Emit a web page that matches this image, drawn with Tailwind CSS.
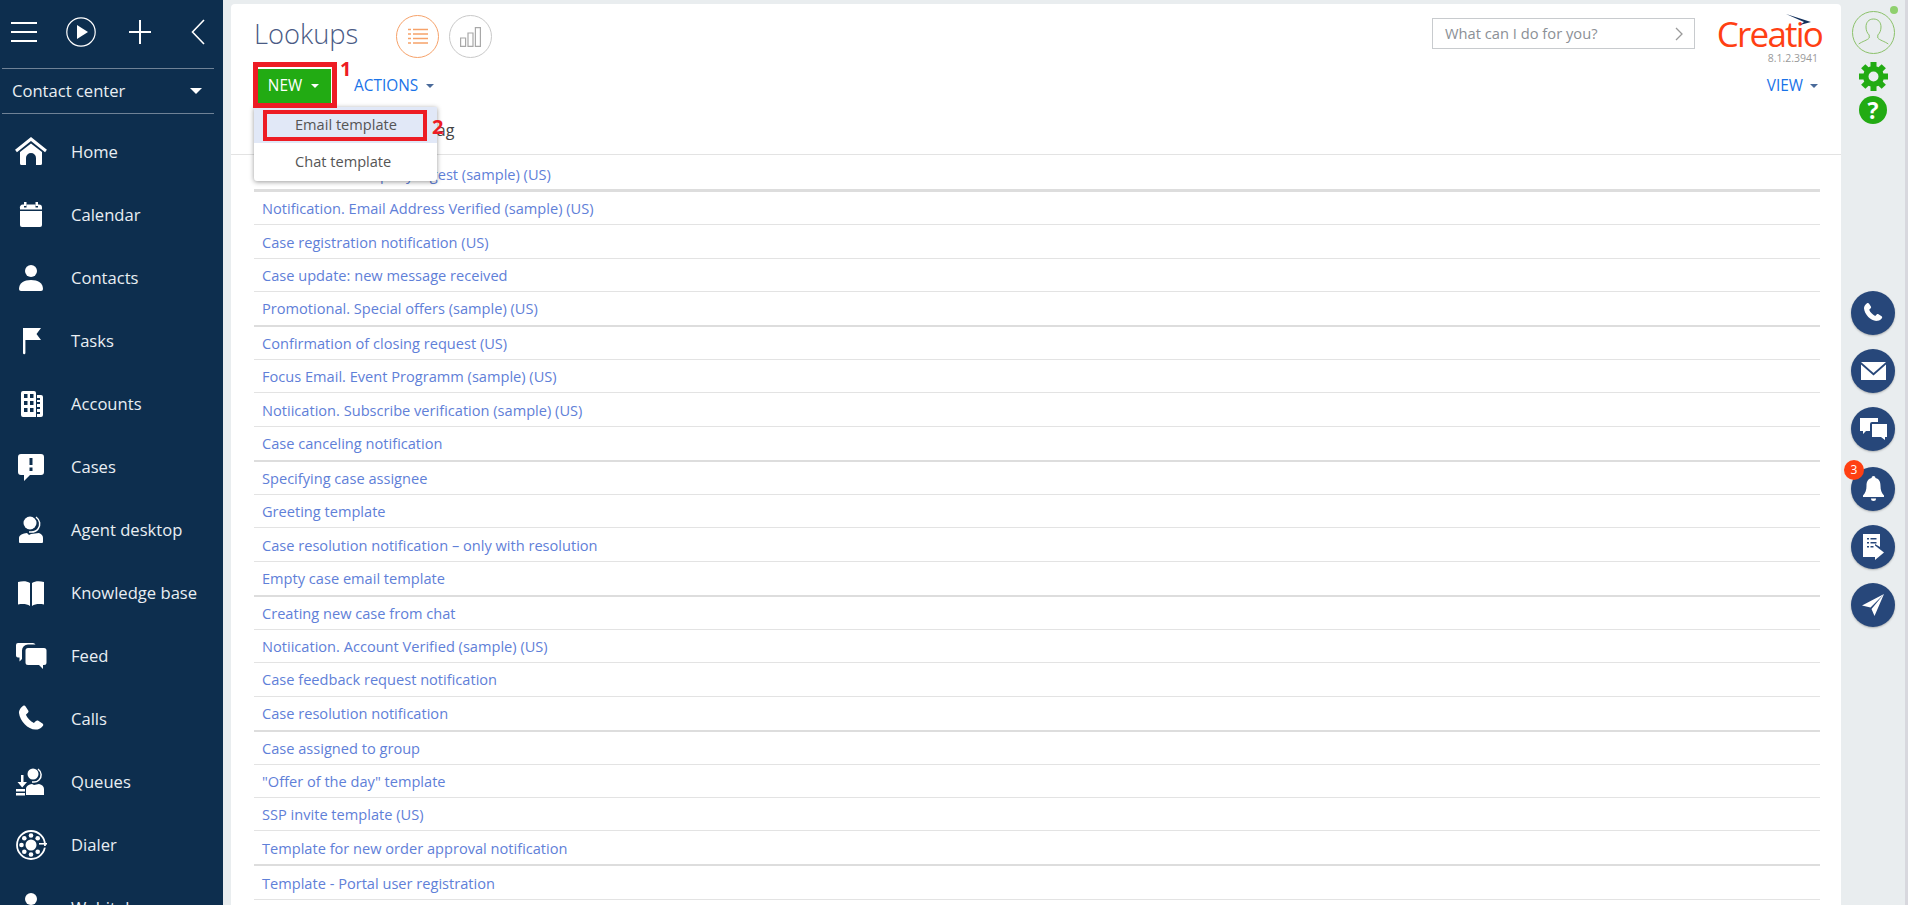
<!DOCTYPE html>
<html lang="en">
<head>
<meta charset="utf-8">
<title>Lookups</title>
<script src="https://cdn.jsdelivr.net/npm/@tailwindcss/browser@4"></script>
</head>
<body class="h-[905px] w-[1908px] overflow-hidden bg-[#e9edef] font-['Open_Sans',sans-serif]">
<div class="flex h-[905px] w-[1908px]">

  <!-- Sidebar -->
  <aside class="flex h-[905px] w-[223px] shrink-0 flex-col overflow-hidden bg-[#0d2e4e] text-[#e9eef3]">
    <div class="flex h-[68px] shrink-0 items-center pl-[11px] pb-[4px]">
      <svg class="h-[24px] w-[26px]" viewBox="0 0 26 24" fill="none" stroke="#fff" stroke-width="2"><path d="M0 3h26M0 12h26M0 21h26"/></svg>
      <svg class="ml-[29px] h-[30px] w-[30px]" viewBox="0 0 30 30" fill="none"><circle cx="15" cy="15" r="14.2" stroke="#fff" stroke-width="1.2"/><path d="M11 8l11 7-11 7z" fill="#fff"/></svg>
      <svg class="ml-[32px] h-[24px] w-[24px]" viewBox="0 0 24 24" fill="none" stroke="#fff" stroke-width="2"><path d="M12 0v24M1 12h22"/></svg>
      <svg class="ml-[39px] h-[26px] w-[14px]" viewBox="0 0 14 26" fill="none" stroke="#fff" stroke-width="1.6"><path d="M13 1L1.5 13 13 25"/></svg>
    </div>
    <div class="mx-[2px] flex h-[46px] w-[212px] shrink-0 items-center justify-between border-y border-[#6f8296] pl-[10px] pr-[12px] text-[16.600px]">
      <span>Contact center</span>
      <span class="h-0 w-0 border-x-[6px] border-t-[6px] border-x-transparent border-t-white"></span>
    </div>
    <nav class="flex flex-col pt-[6.5px] text-[16.600px]">
      <a class="flex h-[63px] shrink-0 items-center">
        <svg class="ml-[15px] h-[32px] w-[32px]" viewBox="0 0 32 32" fill="#fff"><path d="M1 15L16 3l15 12" fill="none" stroke="#fff" stroke-width="3"/><path d="M5 16L16 7.500l11 8.500v11.500a1.500 1.500 0 0 1-1.500 1.500H21v-7a5 5 0 0 0-10 0v7H6.500A1.500 1.500 0 0 1 5 27.500z"/></svg>
        <span class="ml-[24px]">Home</span>
      </a>
      <a class="flex h-[63px] shrink-0 items-center">
        <svg class="ml-[15px] h-[32px] w-[32px]" viewBox="0 0 32 32" fill="#fff"><path d="M9 3h2.500v4H9zM20.500 3H23v4h-2.500z"/><path d="M5 9.500A3 3 0 0 1 8 5.500h1v3h2.500v-3h9v3H23v-3h1a3 3 0 0 1 3 3v2H5z"/><path d="M5 12h22v14a2 2 0 0 1-2 2H7a2 2 0 0 1-2-2z"/></svg>
        <span class="ml-[24px]">Calendar</span>
      </a>
      <a class="flex h-[63px] shrink-0 items-center">
        <svg class="ml-[15px] h-[32px] w-[32px]" viewBox="0 0 32 32" fill="#fff"><circle cx="16" cy="9" r="6"/><path d="M4 27c0-6 5-9 12-9s12 3 12 9a2 2 0 0 1-2 2H6a2 2 0 0 1-2-2z"/></svg>
        <span class="ml-[24px]">Contacts</span>
      </a>
      <a class="flex h-[63px] shrink-0 items-center">
        <svg class="ml-[15px] h-[32px] w-[32px]" viewBox="0 0 32 32" fill="#fff"><path d="M8 3h2.400v25a1.200 1.200 0 0 1-2.400 0z"/><path d="M10 3h16l-4.500 6 4.500 6H10z"/></svg>
        <span class="ml-[24px]">Tasks</span>
      </a>
      <a class="flex h-[63px] shrink-0 items-center">
        <svg class="ml-[15px] h-[32px] w-[32px]" viewBox="0 0 32 32" fill="#fff"><path fill-rule="evenodd" d="M6 5a2 2 0 0 1 2-2h11a2 2 0 0 1 2 2v24H8a2 2 0 0 1-2-2zM9 6v4h3.500V6zM15 6v4h3.500V6zM9 13v4h3.500v-4zM15 13v4h3.500v-4zM9 20v4h3.500v-4zM15 20v4h3.500v-4z"/><path fill-rule="evenodd" d="M22 7h4a2 2 0 0 1 2 2v18a2 2 0 0 1-2 2h-4v-3h3v-2h-3v-3h3v-2h-3v-3h3v-2h-3v-2h3v-2h-3z"/></svg>
        <span class="ml-[24px]">Accounts</span>
      </a>
      <a class="flex h-[63px] shrink-0 items-center">
        <svg class="ml-[15px] h-[32px] w-[32px]" viewBox="0 0 32 32" fill="#fff"><path fill-rule="evenodd" d="M6 3h20a3 3 0 0 1 3 3v15a3 3 0 0 1-3 3H15l-6 6v-6H6a3 3 0 0 1-3-3V6a3 3 0 0 1 3-3zM14.500 7v7h3V7zM14.500 16.500v3.500h3v-3.500z"/></svg>
        <span class="ml-[24px]">Cases</span>
      </a>
      <a class="flex h-[63px] shrink-0 items-center">
        <svg class="ml-[15px] h-[32px] w-[32px]" viewBox="0 0 32 32" fill="#fff"><circle cx="15" cy="9" r="6.500"/><path d="M21 3c4 3 5 8 2 12s-6 3-9 3" fill="none" stroke="#fff" stroke-width="1.500"/><path d="M4 24c0-3 4-4.500 8-5l2 2 2-1 8-1 0 0c3 1 4 3 4 5v4a1 1 0 0 1-1 1H5a1 1 0 0 1-1-1z"/></svg>
        <span class="ml-[24px]">Agent desktop</span>
      </a>
      <a class="flex h-[63px] shrink-0 items-center">
        <svg class="ml-[15px] h-[32px] w-[32px]" viewBox="0 0 32 32" fill="#fff"><path d="M3 5c5-1.500 9-1 12 1v23c-3-2-7-2.500-12-1.500z"/><path d="M29 5c-5-1.500-9-1-12 1v23c3-2 7-2.500 12-1.500z"/></svg>
        <span class="ml-[24px]">Knowledge base</span>
      </a>
      <a class="flex h-[63px] shrink-0 items-center">
        <svg class="ml-[15px] h-[32px] w-[32px]" viewBox="0 0 32 32" fill="#fff"><path d="M3 3h15a3 3 0 0 1 2.500 1.500H13a6 6 0 0 0-6 6v8.500l-2.500 2.500v-4H3a2 2 0 0 1-2-2V5a2 2 0 0 1 2-2z"/><path d="M13 8h16a2.500 2.500 0 0 1 2.500 2.500v12a2.500 2.500 0 0 1-2.500 2.500h-1v4l-4-4H13a2.500 2.500 0 0 1-2.500-2.500v-12A2.500 2.500 0 0 1 13 8z"/></svg>
        <span class="ml-[24px]">Feed</span>
      </a>
      <a class="flex h-[63px] shrink-0 items-center">
        <svg class="ml-[15px] h-[32px] w-[32px]" viewBox="0 0 32 32" fill="#fff"><path d="M8 3c1-.6 2-.5 2.600.4l2.600 4c.5.8.4 1.700-.3 2.400l-2 2c1.500 3.500 4.500 6.600 8 8.200l2-2c.7-.7 1.600-.8 2.400-.3l4.200 2.700c.9.6 1 1.800.3 2.600-1.500 1.700-3.500 3.700-5.800 3.400C14 27.700 5 18.500 4 10c-.3-2.700 2-5.600 4-7z"/></svg>
        <span class="ml-[24px]">Calls</span>
      </a>
      <a class="flex h-[63px] shrink-0 items-center">
        <svg class="ml-[15px] h-[32px] w-[32px]" viewBox="0 0 32 32" fill="#fff"><circle cx="18" cy="8" r="5.500"/><path d="M23 3c4 3 4 8 1 11s-5 2-7 2" fill="none" stroke="#fff" stroke-width="1.500"/><path d="M11 23c0-3 3-4.500 6-5l2 1 5-1c3 .8 5 2.500 5 5v6H11z"/><path d="M6 9h2.500v7H12l-4.800 5.500L2.500 16H6zM1 23h9v2.500H1zM1 27h9v2.500H1z"/></svg>
        <span class="ml-[24px]">Queues</span>
      </a>
      <a class="flex h-[63px] shrink-0 items-center">
        <svg class="ml-[15px] h-[32px] w-[32px]" viewBox="0 0 32 32"><circle cx="16" cy="16" r="14" fill="none" stroke="#fff" stroke-width="1.800"/><circle cx="16" cy="16" r="5.500" fill="#fff"/><g fill="#fff"><circle cx="16" cy="6.500" r="2.300"/><circle cx="9.300" cy="9.300" r="2.300"/><circle cx="6.500" cy="16" r="2.300"/><circle cx="9.300" cy="22.700" r="2.300"/><circle cx="16" cy="25.500" r="2.300"/><circle cx="22.700" cy="22.700" r="2.300"/><circle cx="22.700" cy="9.300" r="2.300"/></g><path d="M24 14h8v1.600h-8z" fill="#fff"/><path d="M24 17h8v1.600h-8z" fill="#0d2e4e"/></svg>
        <span class="ml-[24px]">Dialer</span>
      </a>
      <a class="flex h-[63px] shrink-0 items-center">
        <svg class="ml-[15px] h-[32px] w-[32px]" viewBox="0 0 32 32" fill="#fff"><circle cx="16" cy="7" r="6"/><path d="M4 22c0-5 5-9 12-9s12 4 12 9v6H4z"/></svg>
        <span class="ml-[24px]">Webitel</span>
      </a>
    </nav>
  </aside>

  <!-- Gutter + Main card -->
  <main class="relative ml-[8px] mt-[4px] h-[901px] w-[1610px] shrink-0 overflow-hidden rounded-t-[4px] bg-white">
    <div class="flex h-[54px] items-start pt-[11px] pl-[23px] pr-[19px]">
      <h1 class="-mt-[2px] text-[27.300px] leading-[42px] font-light text-[#4a5b85]">Lookups</h1>
      <div class="ml-[38px] flex h-[43px] w-[43px] shrink-0 items-center justify-center rounded-full border border-[#f6a26a]">
        <svg class="h-[17px] w-[20px]" viewBox="0 0 20 17" fill="none" stroke="#f6a26a" stroke-width="1.300"><path d="M0 1.500h3M5 1.500h15M0 6h3M5 6h15M0 10.500h3M5 10.500h15M0 15h3M5 15h15"/></svg>
      </div>
      <div class="ml-[10px] flex h-[43px] w-[43px] shrink-0 items-center justify-center rounded-full border border-[#c9c9c9]">
        <svg class="h-[20px] w-[21px]" viewBox="0 0 21 20" fill="none" stroke="#a8a8a8" stroke-width="1.200"><path d="M.6 11h5v8.400h-5zM8 6h5v13.400H8zM15.400.6h5v18.800h-5z"/></svg>
      </div>
      <div class="mt-[3px] ml-auto flex h-[31px] w-[263px] items-center justify-between border border-[#c8cbce] pl-[12px] pr-[11px] text-[14.700px] text-[#8b9096]">
        <span>What can I do for you?</span>
        <svg class="h-[14px] w-[8px]" viewBox="0 0 8 14" fill="none" stroke="#9a9a9a" stroke-width="1.300"><path d="M1 1l6 6-6 6"/></svg>
      </div>
      <div class="relative ml-[21px] h-[43px] w-[106px] shrink-0">
        <span class="-mt-[1px] block text-right text-[35px] leading-[40px] tracking-[-1.800px] text-[#ff4013]">Creatio</span>
        <svg class="absolute right-[11px] top-[-1px] h-[11px] w-[25px]" viewBox="0 0 25 11" fill="#12305c"><path d="M0 0l25 8-11 3 4-3z"/></svg>
        <span class="absolute right-[4px] top-[37px] text-[10.500px] leading-[12px] text-[#9a9a9a]">8.1.2.3941</span>
      </div>
    </div>
    <div class="mt-[11px] flex h-[34px] items-center pl-[27px] pr-[23px]">
      <button class="flex h-[34px] w-[73px] items-center justify-center gap-[9px] pr-[2px] bg-[#22ab13] text-[15.400px] text-white">NEW<span class="h-0 w-0 border-x-[4.500px] border-t-[4.500px] border-x-transparent border-t-white"></span></button>
      <button class="ml-[23px] flex items-center gap-[8px] text-[15.400px] text-[#1a73e8]">ACTIONS<span class="h-0 w-0 border-x-[4.500px] border-t-[4.500px] border-x-transparent border-t-[#4a6a9a]"></span></button>
      <button class="ml-auto flex items-center gap-[7px] text-[15.400px] text-[#1a73e8]">VIEW<span class="h-0 w-0 border-x-[4.500px] border-t-[4.500px] border-x-transparent border-t-[#4a6a9a]"></span></button>
    </div>
    <div class="flex h-[52px] items-center border-b border-[#e3e3e3] pl-[197px] pt-[2px] text-[16px] text-[#444]">Tag</div>

    <div class="ml-[23px] mr-[21px] flex flex-col text-[14.600px] text-[#5f80d8]">
      <div class="flex h-[37px] shrink-0 items-center border-b-[3px] border-[#dddddd] pl-[8px] pt-[6px]">Notification. Company digest (sample) (US)</div>
      <div class="flex h-[33.300px] shrink-0 items-center border-b border-[#e3e3e3] pl-[8px] pt-[2px]">Notification. Email Address Verified (sample) (US)</div>
      <div class="flex h-[33.300px] shrink-0 items-center border-b border-[#e3e3e3] pl-[8px] pt-[2px]">Case registration notification (US)</div>
      <div class="flex h-[33.300px] shrink-0 items-center border-b border-[#e3e3e3] pl-[8px] pt-[2px]">Case update: new message received</div>
      <div class="flex h-[35px] shrink-0 items-center border-b-[2px] border-[#dddddd] pl-[8px] pt-[2px]">Promotional. Special offers (sample) (US)</div>
      <div class="flex h-[33.300px] shrink-0 items-center border-b border-[#e3e3e3] pl-[8px] pt-[2px]">Confirmation of closing request (US)</div>
      <div class="flex h-[33.300px] shrink-0 items-center border-b border-[#e3e3e3] pl-[8px] pt-[2px]">Focus Email. Event Programm (sample) (US)</div>
      <div class="flex h-[33.300px] shrink-0 items-center border-b border-[#e3e3e3] pl-[8px] pt-[2px]">Notiication. Subscribe verification (sample) (US)</div>
      <div class="flex h-[35px] shrink-0 items-center border-b-[2px] border-[#dddddd] pl-[8px] pt-[2px]">Case canceling notification</div>
      <div class="flex h-[33.300px] shrink-0 items-center border-b border-[#e3e3e3] pl-[8px] pt-[2px]">Specifying case assignee</div>
      <div class="flex h-[33.300px] shrink-0 items-center border-b border-[#e3e3e3] pl-[8px] pt-[2px]">Greeting template</div>
      <div class="flex h-[33.300px] shrink-0 items-center border-b border-[#e3e3e3] pl-[8px] pt-[2px]">Case resolution notification – only with resolution</div>
      <div class="flex h-[35px] shrink-0 items-center border-b-[2px] border-[#dddddd] pl-[8px] pt-[2px]">Empty case email template</div>
      <div class="flex h-[33.300px] shrink-0 items-center border-b border-[#e3e3e3] pl-[8px] pt-[2px]">Creating new case from chat</div>
      <div class="flex h-[33.300px] shrink-0 items-center border-b border-[#e3e3e3] pl-[8px] pt-[2px]">Notiication. Account Verified (sample) (US)</div>
      <div class="flex h-[33.300px] shrink-0 items-center border-b border-[#e3e3e3] pl-[8px] pt-[2px]">Case feedback request notification</div>
      <div class="flex h-[35px] shrink-0 items-center border-b-[2px] border-[#dddddd] pl-[8px] pt-[2px]">Case resolution notification</div>
      <div class="flex h-[33.300px] shrink-0 items-center border-b border-[#e3e3e3] pl-[8px] pt-[2px]">Case assigned to group</div>
      <div class="flex h-[33.300px] shrink-0 items-center border-b border-[#e3e3e3] pl-[8px] pt-[2px]">"Offer of the day" template</div>
      <div class="flex h-[33.300px] shrink-0 items-center border-b border-[#e3e3e3] pl-[8px] pt-[2px]">SSP invite template (US)</div>
      <div class="flex h-[35px] shrink-0 items-center border-b-[2px] border-[#dddddd] pl-[8px] pt-[2px]">Template for new order approval notification</div>
      <div class="flex h-[33.300px] shrink-0 items-center border-b border-[#e3e3e3] pl-[8px] pt-[2px]">Template - Portal user registration</div>
    </div>

    <!-- Dropdown menu -->
    <div class="absolute left-[23px] top-[103px] w-[183px] rounded-b-[3px] bg-white text-[14.600px] text-[#555] shadow-[0_1px_5px_rgba(0,0,0,0.4)]">
      <div class="flex h-[36px] items-center bg-[#e1e8f7] pl-[41px]">Email template</div>
      <div class="flex h-[38px] items-center pl-[41px]">Chat template</div>
    </div>
    <!-- Annotations -->
    <div class="absolute left-[22px] top-[58px] h-[46px] w-[84px] border-[5px] border-[#ed1c24]"></div>
    <span class="absolute left-[109px] top-[52px] text-[20px] leading-[26px] font-bold text-[#ed1c24]">1</span>
    <div class="absolute left-[32px] top-[106px] h-[31px] w-[164px] border-[4px] border-[#ed1c24]"></div>
    <span class="absolute left-[201px] top-[110px] text-[20px] leading-[26px] font-bold text-[#ed1c24]">2</span>
  </main>

  <!-- Right bar -->
  <aside class="flex h-[905px] w-[64px] shrink-0 flex-col items-center">
    <div class="relative mt-[11px] h-[43px] w-[43px] shrink-0 rounded-full border border-[#8bc16a]">
      <svg class="h-[41px] w-[41px]" viewBox="0 0 41 41" fill="none" stroke="#8bc16a" stroke-width="1"><path d="M20.500 7c-5 0-7.500 3.500-7.500 8 0 3 1 6 3.200 8v3c-1.500 2-7 3.500-10.500 6M20.500 7c5 0 7.500 3.500 7.500 8 0 3-1 6-3.200 8v3c1.500 2 7 3.500 10.500 6"/></svg>
      <span class="absolute right-[-4px] top-[-6px] h-[8px] w-[8px] rounded-full bg-[#8fd06e]"></span>
    </div>
    <svg class="mt-[8px] h-[29px] w-[29px] shrink-0" viewBox="0 0 29 29" fill="#22ab13"><path fill-rule="evenodd" d="M14.500 4a10.500 10.500 0 1 0 0 21 10.500 10.500 0 0 0 0-21zM14.500 9.500a5 5 0 1 1 0 10 5 5 0 0 1 0-10z"/><g><rect x="11.500" y="0" width="6" height="6"/><rect x="11.500" y="23" width="6" height="6"/><rect x="0" y="11.500" width="6" height="6"/><rect x="23" y="11.500" width="6" height="6"/><rect x="11.500" y="0" width="6" height="6" transform="rotate(45 14.500 14.500)"/><rect x="11.500" y="23" width="6" height="6" transform="rotate(45 14.500 14.500)"/><rect x="0" y="11.500" width="6" height="6" transform="rotate(45 14.500 14.500)"/><rect x="23" y="11.500" width="6" height="6" transform="rotate(45 14.500 14.500)"/></g></svg>
    <div class="mt-[5px] flex h-[28px] w-[28px] shrink-0 items-center justify-center rounded-full bg-[#22ab13] text-[23px] leading-[28px] font-bold text-white">?</div>

    <div class="mt-[167px] flex h-[44px] w-[44px] shrink-0 items-center justify-center rounded-full bg-[#27477a] shadow-[0_1px_2px_rgba(0,0,0,0.25)]">
      <svg class="h-[24px] w-[24px]" viewBox="0 0 32 32" fill="#fff"><path d="M8 3c1-.6 2-.5 2.600.4l2.600 4c.5.8.4 1.700-.3 2.400l-2 2c1.500 3.500 4.500 6.600 8 8.200l2-2c.7-.7 1.600-.8 2.400-.3l4.200 2.700c.9.6 1 1.800.3 2.600-1.500 1.700-3.500 3.700-5.800 3.400C14 27.700 5 18.500 4 10c-.3-2.700 2-5.600 4-7z"/></svg>
    </div>
    <div class="mt-[14px] flex h-[44px] w-[44px] shrink-0 items-center justify-center rounded-full bg-[#27477a] shadow-[0_1px_2px_rgba(0,0,0,0.25)]">
      <svg class="h-[18px] w-[25px]" viewBox="0 0 25 18" fill="#fff"><path d="M0 0l12.500 11L25 0z"/><path d="M0 2.500V18h25V2.500l-12.500 11z"/></svg>
    </div>
    <div class="mt-[14px] flex h-[44px] w-[44px] shrink-0 items-center justify-center rounded-full bg-[#27477a] shadow-[0_1px_2px_rgba(0,0,0,0.25)]">
      <svg class="h-[22px] w-[27px]" viewBox="0 0 27 22" fill="#fff"><path d="M0 0h18v4H12a2 2 0 0 0-2 2v7H6l-3 3v-3H0z"/><path d="M12 6h15v13h-2v3l-4-3h-9z"/></svg>
    </div>
    <div class="relative mt-[16px] flex h-[44px] w-[44px] shrink-0 items-center justify-center rounded-full bg-[#27477a] shadow-[0_1px_2px_rgba(0,0,0,0.25)]">
      <svg class="h-[26px] w-[21px]" viewBox="0 0 21 26" fill="#fff"><path d="M10.500 0a2 2 0 0 1 2 2c4 1 5 4 5 8 0 4 1 7 3.500 9.500V21H0v-1.500C2.500 17 3.500 14 3.500 10c0-4 1-7 5-8a2 2 0 0 1 2-2z"/><path d="M8 22.500h5a2.500 2.500 0 0 1-5 0z"/></svg>
      <span class="absolute left-[-7px] top-[-7px] flex h-[20px] w-[20px] items-center justify-center rounded-full bg-[#ff4013] text-[12px] text-white">3</span>
    </div>
    <div class="mt-[14px] flex h-[44px] w-[44px] shrink-0 items-center justify-center rounded-full bg-[#27477a] shadow-[0_1px_2px_rgba(0,0,0,0.25)]">
      <svg class="h-[26px] w-[21px]" viewBox="0 0 21 26" fill="#fff"><path fill-rule="evenodd" d="M0 0h17v13l-5-3v13H0zM4 4v1.500h2V4zM7.500 4v1.500h6V4zM4 8v1.500h2V8zM7.500 8v1.500h6V8zM4 12v1.500h2V12zM7.500 12v1.500h3V12z"/><path d="M12 11.500L21 18.500 12 26z"/></svg>
    </div>
    <div class="mt-[14px] flex h-[44px] w-[44px] shrink-0 items-center justify-center rounded-full bg-[#27477a] shadow-[0_1px_2px_rgba(0,0,0,0.25)]">
      <svg class="h-[22px] w-[22px]" viewBox="0 0 22 22" fill="#fff"><path d="M22 0L0 11.500l8.500 2L22 0zM22 0L9.500 15l3 7L22 0z"/></svg>
    </div>
  </aside>

  <div class="h-[905px] w-[3px] shrink-0 bg-[#d8d8de]"></div>
</div>
</body>
</html>
